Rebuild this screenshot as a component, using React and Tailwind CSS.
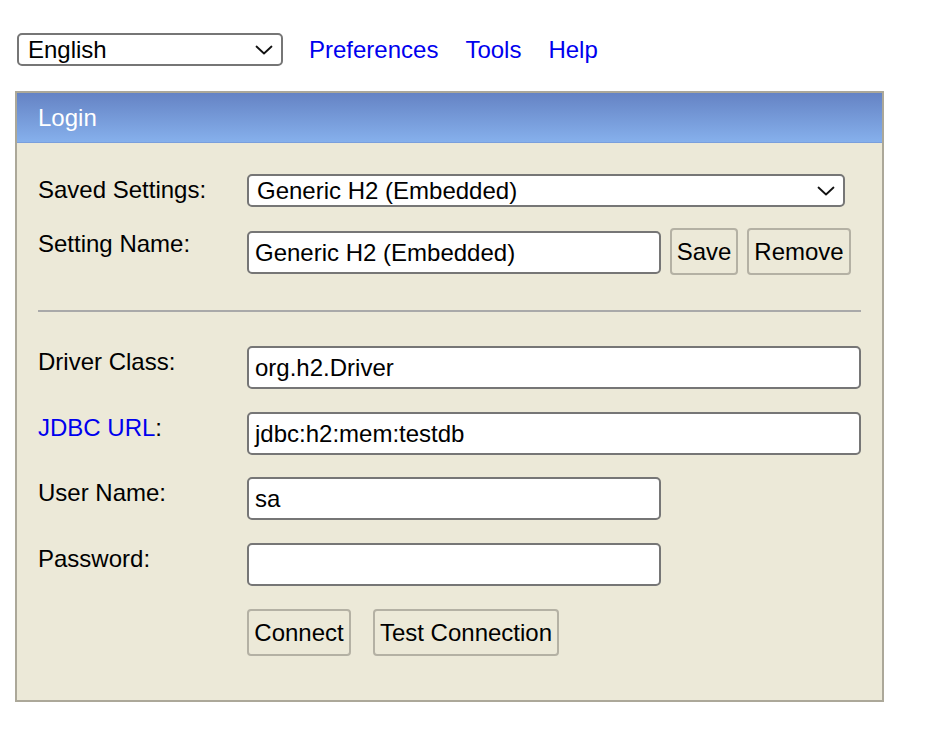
import React from "react";

function Chevron() {
  return (
    <svg width="18" height="10" viewBox="0 0 18 10" fill="none">
      <path d="M1.5 1.5 L9 8.5 L16.5 1.5" stroke="#111" strokeWidth="1.8" strokeLinecap="round" strokeLinejoin="round" />
    </svg>
  );
}

function FakeSelect({ value, className }) {
  return (
    <div className={"flex items-center justify-between bg-white border-2 border-[#767676] rounded-[5px] h-[33px] pl-[8px] pr-[8px] text-black " + className}>
      <span className="leading-none">{value}</span>
      <Chevron />
    </div>
  );
}

function Input({ value, className }) {
  return (
    <div className={"flex items-center bg-white border-2 border-[#767676] rounded-[5px] h-[43px] pl-[6px] text-black " + className}>
      <span className="leading-none">{value}</span>
    </div>
  );
}

function Btn({ children, className }) {
  return (
    <div className={"flex items-center justify-center h-[47px] border-2 border-[#b4b1a4] rounded-[4px] bg-[#ece9d8] text-black " + className}>
      <span className="leading-none">{children}</span>
    </div>
  );
}

function Label({ children }) {
  return <div className="w-[209px] shrink-0 pt-[3px] leading-[26px] text-black">{children}</div>;
}

export default function App() {
  return (
    <div className="font-['Liberation_Sans',Arial,sans-serif] text-[24px] bg-white min-h-[754px] w-[944px] pl-[15px] pt-[33px]">
      <div className="flex items-center h-[33px]">
        <FakeSelect value="English" className="ml-[2px] w-[266px] pl-[9px]" />
        <a className="ml-[26px] text-[#0000ee] leading-none">Preferences</a>
        <a className="ml-[27px] text-[#0000ee] leading-none">Tools</a>
        <a className="ml-[27px] text-[#0000ee] leading-none">Help</a>
      </div>

      <div className="mt-[25px] w-[869px] border-2 border-[#aca899] bg-[#ece9d8]">
        <div className="h-[50px] flex items-center pl-[21px] text-white bg-gradient-to-b from-[#6583c4] to-[#86b0ec] border-b border-[#7a9fdd]">
          <span className="leading-none">Login</span>
        </div>

        <div className="pl-[21px] pr-[21px] pt-[31px] pb-[44px]">
          <div className="flex items-start">
            <Label>Saved Settings:</Label>
            <FakeSelect value="Generic H2 (Embedded)" className="w-[598px]" />
          </div>

          <div className="flex items-start mt-[21px]">
            <Label>Setting Name:</Label>
            <Input value="Generic H2 (Embedded)" className="w-[414px] mt-[3px]" />
            <Btn className="ml-[9px] w-[68px]">Save</Btn>
            <Btn className="ml-[9px] w-[104px]">Remove</Btn>
          </div>

          <div className="mt-[35px] h-[2px] bg-[#a9a9a9]" />

          <div className="flex items-start mt-[34px]">
            <Label>Driver Class:</Label>
            <Input value="org.h2.Driver" className="w-[614px]" />
          </div>

          <div className="flex items-start mt-[23px]">
            <Label>
              <span className="text-[#0000ee]">JDBC URL</span>:
            </Label>
            <Input value="jdbc:h2:mem:testdb" className="w-[614px]" />
          </div>

          <div className="flex items-start mt-[22px]">
            <Label>User Name:</Label>
            <Input value="sa" className="w-[414px]" />
          </div>

          <div className="flex items-start mt-[23px]">
            <Label>Password:</Label>
            <Input value="" className="w-[414px]" />
          </div>

          <div className="flex items-start mt-[23px]">
            <div className="w-[209px] shrink-0" />
            <Btn className="w-[104px]">Connect</Btn>
            <Btn className="ml-[22px] w-[186px]">Test Connection</Btn>
          </div>
        </div>
      </div>
    </div>
  );
}
